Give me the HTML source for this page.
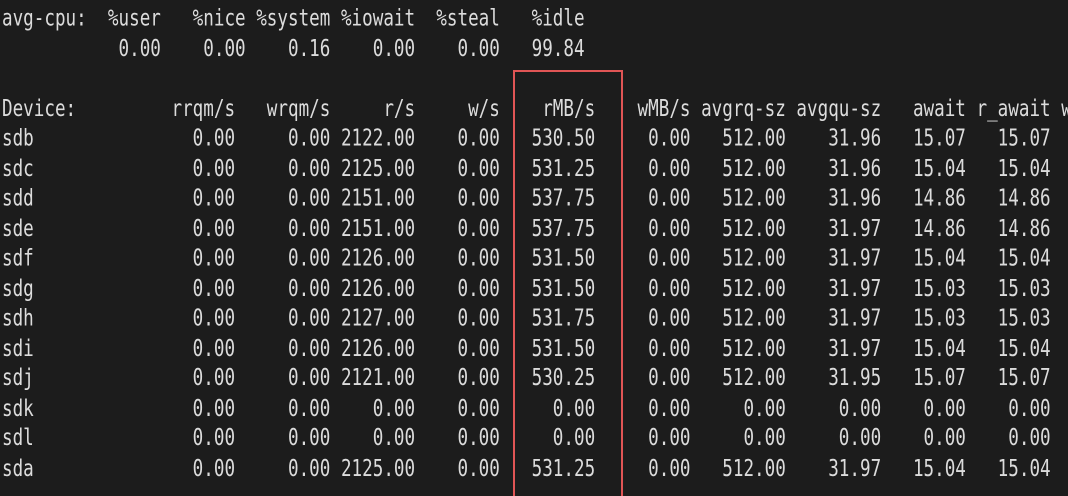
<!DOCTYPE html>
<html><head><meta charset="utf-8"><style>
html,body{margin:0;padding:0;background:#1c1c1c;width:1068px;height:496px;overflow:hidden;}
.w{position:absolute;left:0;top:0;width:1068px;height:496px;overflow:hidden;}
.t{position:absolute;left:2px;top:4px;font-family:"DejaVu Sans Mono","Liberation Mono",monospace;font-size:17.6px;line-height:22.5px;color:#dcdcdc;white-space:pre;transform:scaleY(1.333);transform-origin:0 0;}
.box{position:absolute;left:513px;top:70px;width:106px;height:440px;border:2px solid #e05555;}
</style></head><body><div class="w">
<div class="t">avg-cpu:  %user   %nice %system %iowait  %steal   %idle
           0.00    0.00    0.16    0.00    0.00   99.84

Device:         rrqm/s   wrqm/s     r/s     w/s    rMB/s    wMB/s avgrq-sz avgqu-sz   await r_await w
sdb               0.00     0.00 2122.00    0.00   530.50     0.00   512.00    31.96   15.07   15.07
sdc               0.00     0.00 2125.00    0.00   531.25     0.00   512.00    31.96   15.04   15.04
sdd               0.00     0.00 2151.00    0.00   537.75     0.00   512.00    31.96   14.86   14.86
sde               0.00     0.00 2151.00    0.00   537.75     0.00   512.00    31.97   14.86   14.86
sdf               0.00     0.00 2126.00    0.00   531.50     0.00   512.00    31.97   15.04   15.04
sdg               0.00     0.00 2126.00    0.00   531.50     0.00   512.00    31.97   15.03   15.03
sdh               0.00     0.00 2127.00    0.00   531.75     0.00   512.00    31.97   15.03   15.03
sdi               0.00     0.00 2126.00    0.00   531.50     0.00   512.00    31.97   15.04   15.04
sdj               0.00     0.00 2121.00    0.00   530.25     0.00   512.00    31.95   15.07   15.07
sdk               0.00     0.00    0.00    0.00     0.00     0.00     0.00     0.00    0.00    0.00
sdl               0.00     0.00    0.00    0.00     0.00     0.00     0.00     0.00    0.00    0.00
sda               0.00     0.00 2125.00    0.00   531.25     0.00   512.00    31.97   15.04   15.04</div>
<div class="box"></div>
</div></body></html>
